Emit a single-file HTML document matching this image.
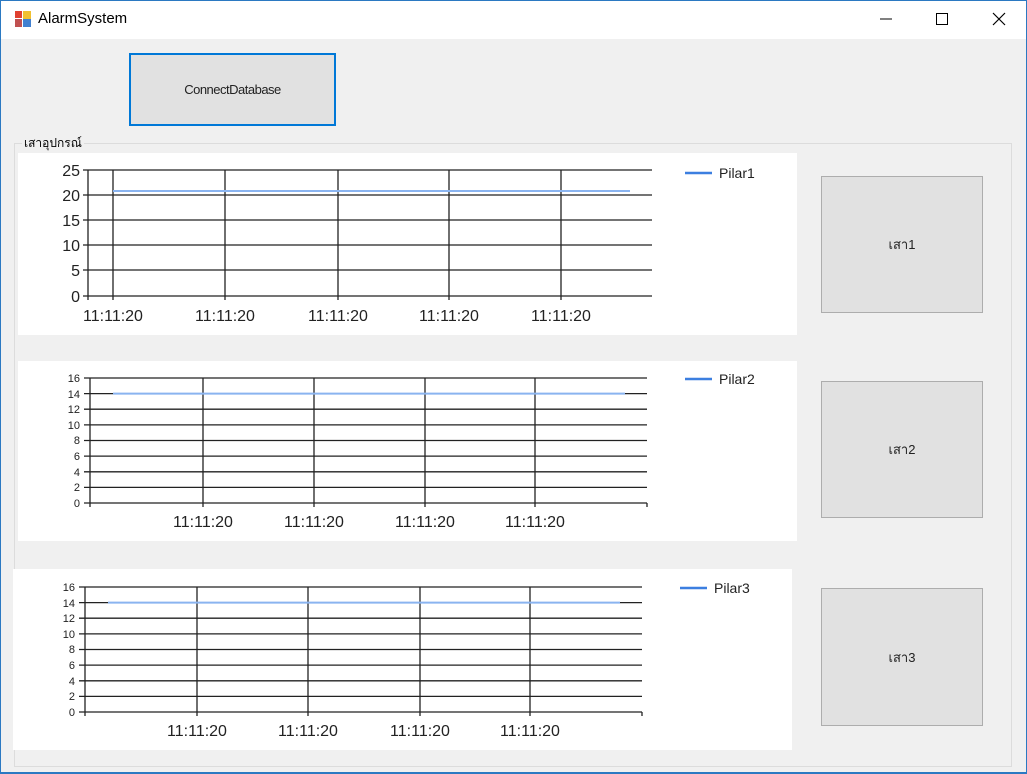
<!DOCTYPE html>
<html><head><meta charset="utf-8"><style>
body{margin:0;width:1027px;height:773px;overflow:hidden;background:#f0f0f0;font-family:"Liberation Sans",sans-serif;position:relative}
.tb{position:absolute;left:0;top:0;width:1027px;height:39px;background:#fff}
.win{position:absolute;left:0;top:0;width:1025px;height:771px;border:1px solid #2b79c2;border-bottom:2px solid #2b79c2;pointer-events:none}
.btn{position:absolute;background:#e1e1e1;border:1px solid #adadad;font-size:13px;display:flex;align-items:center;justify-content:center;color:#222}
.pan{position:absolute;background:#fff}
</style></head><body>
<div class="tb"></div>
<div style="position:absolute;left:15px;top:11px;width:16px;height:16px">
<div style="position:absolute;left:0;top:0;width:7px;height:7px;background:#e04030"></div>
<div style="position:absolute;left:8px;top:0;width:8px;height:8px;background:#f0c030"></div>
<div style="position:absolute;left:0;top:8px;width:7px;height:8px;background:#c05050"></div>
<div style="position:absolute;left:8px;top:8px;width:8px;height:8px;background:#4080d0"></div></div>
<div style="position:absolute;left:38px;top:10px;font-size:15px;color:#000">AlarmSystem</div>
<svg style="position:absolute;left:870px;top:8px" width="150" height="22"><line x1="10" y1="11" x2="22" y2="11" stroke="#000"/><rect x="66.5" y="5.5" width="11" height="11" fill="none" stroke="#000"/><path d="M123 5L135 17M135 5L123 17" stroke="#000" stroke-width="1.2"/></svg>
<div class="btn" style="left:129px;top:53px;width:203px;height:69px;border:2px solid #0078d7;letter-spacing:-0.5px">ConnectDatabase</div>
<div style="position:absolute;left:14px;top:143px;width:996px;height:622px;border:1px solid #dcdcdc"></div>
<div style="position:absolute;left:22px;top:134px;font-size:12px;background:#f0f0f0;padding:0 2px">เสาอุปกรณ์</div>
<div class="pan" style="left:18px;top:153px;width:779px;height:182px"></div>
<div class="pan" style="left:18px;top:361px;width:779px;height:180px"></div>
<div class="pan" style="left:13px;top:569px;width:779px;height:181px"></div>
<svg style="position:absolute;left:0;top:0" width="1027" height="773" font-family="Liberation Sans" fill="#222">
<g stroke="#222" stroke-width="1.3">
<path d="M83 170H652M83 195H652M83 220H652M83 245H652M83 270H652M83 296H652M88 170V300M113 170V300M225 170V300M338 170V300M449 170V300M561 170V300"/>
<path d="M84 378H647M84 393.6H647M84 409.2H647M84 424.9H647M84 440.5H647M84 456.1H647M84 471.8H647M84 487.4H647M84 503H647M90 378V507M203 378V507M314 378V507M425 378V507M535 378V507M647 503V507"/>
<path d="M79 587H642M79 602.6H642M79 618.2H642M79 633.9H642M79 649.5H642M79 665.1H642M79 680.8H642M79 696.4H642M79 712H642M85 587V716M197 587V716M308 587V716M420 587V716M530 587V716M642 712V716"/>
</g>
<g stroke="#8ab4f0" stroke-width="2"><path d="M113 191H630M113 393.6H625M108 602.6H620"/></g>
<g stroke="#3c7fe0" stroke-width="2.5"><path d="M685 173H712M685 379H712M680 588H707"/></g>
<g font-size="14"><text x="719" y="178">Pilar1</text><text x="719" y="384">Pilar2</text><text x="714" y="593">Pilar3</text></g>
<g font-size="16" text-anchor="end"><text x="80" y="176">25</text><text x="80" y="201">20</text><text x="80" y="226">15</text><text x="80" y="251">10</text><text x="80" y="276">5</text><text x="80" y="302">0</text></g>
<g font-size="16" text-anchor="middle"><text x="113" y="321">11:11:20</text><text x="225" y="321">11:11:20</text><text x="338" y="321">11:11:20</text><text x="449" y="321">11:11:20</text><text x="561" y="321">11:11:20</text>
<text x="203" y="527">11:11:20</text><text x="314" y="527">11:11:20</text><text x="425" y="527">11:11:20</text><text x="535" y="527">11:11:20</text>
<text x="197" y="736">11:11:20</text><text x="308" y="736">11:11:20</text><text x="420" y="736">11:11:20</text><text x="530" y="736">11:11:20</text></g>
<g font-size="11" text-anchor="end"><text x="80" y="382">16</text><text x="80" y="398">14</text><text x="80" y="413">12</text><text x="80" y="429">10</text><text x="80" y="444">8</text><text x="80" y="460">6</text><text x="80" y="476">4</text><text x="80" y="491">2</text><text x="80" y="507">0</text>
<text x="75" y="591">16</text><text x="75" y="607">14</text><text x="75" y="622">12</text><text x="75" y="638">10</text><text x="75" y="653">8</text><text x="75" y="669">6</text><text x="75" y="685">4</text><text x="75" y="700">2</text><text x="75" y="716">0</text></g>
</svg>
<div class="btn" style="left:821px;top:176px;width:160px;height:135px">เสา1</div>
<div class="btn" style="left:821px;top:381px;width:160px;height:135px">เสา2</div>
<div class="btn" style="left:821px;top:588px;width:160px;height:136px">เสา3</div>
<div class="win"></div>
</body></html>
